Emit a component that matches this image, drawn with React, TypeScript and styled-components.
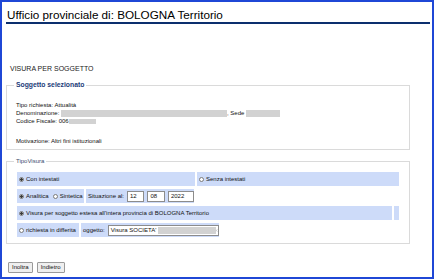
import styled, { createGlobalStyle } from 'styled-components';

const GlobalStyle = createGlobalStyle`
    html, body {
        margin: 0;
        padding: 0;
        background: #fff;
    }
    body {
        font-family: "Liberation Sans", Arial, sans-serif;
        color: #111;
    }
`;

const Frame = styled.div`
    width: 434px;
    height: 279px;
    box-sizing: border-box;
    border: 2px solid #1f47d6;
    background: #fff;
    overflow: hidden;
`;

const Header = styled.h1`
    margin: 0 2px 0 4px;
    padding: 5px 0 0 1px;
    font-size: 11.7px;
    line-height: 15px;
    font-weight: normal;
    color: #000;
    border-bottom: 2px solid #0c2f6e;
`;

const PageTitle = styled.h2`
    margin: 40px 0 0 8px;
    font-size: 7px;
    line-height: 9px;
    font-weight: normal;
    color: #222;
`;

const Box = styled.fieldset<{ $top: number }>`
    margin: ${(p) => p.$top}px 0 0 4px;
    width: 404px;
    box-sizing: border-box;
    padding: 0;
    border: 1px solid #dadada;
    min-width: 0;
`;

const Legend = styled.legend<{ $bold?: boolean }>`
    margin-left: 7px;
    padding: 0 2px;
    font-size: ${(p) => (p.$bold ? '6.8px' : '6px')};
    line-height: 8px;
    font-weight: ${(p) => (p.$bold ? 'bold' : 'normal')};
    color: ${(p) => (p.$bold ? '#1b3a78' : '#3b4c6e')};
`;

const Info = styled.div`
    padding: 12px 9px 4px;
`;

const Line = styled.div<{ $gap?: number }>`
    display: flex;
    align-items: center;
    height: 8px;
    margin-top: ${(p) => p.$gap ?? 0}px;
    font-size: 6px;
    white-space: pre;
`;

const Redact = styled.span<{ $w: number; $h?: number }>`
    display: inline-block;
    width: ${(p) => p.$w}px;
    height: ${(p) => p.$h ?? 7}px;
    background: #d2d2d2;
    flex-shrink: 0;
`;

const Rows = styled.div`
    display: flex;
    flex-direction: column;
    gap: 3px;
    padding: 7px 10px 6px;
`;

const Row = styled.div`
    display: flex;
    gap: 2px;
    height: 14px;
`;

const Cell = styled.div<{ $w: number }>`
    display: flex;
    align-items: center;
    gap: 2px;
    width: ${(p) => p.$w}px;
    padding-left: 2px;
    box-sizing: border-box;
    background: #cddbf9;
    font-size: 6px;
    white-space: pre;
`;

const Radio = styled.span<{ $checked?: boolean }>`
    display: inline-block;
    width: 5px;
    height: 5px;
    box-sizing: border-box;
    border-radius: 50%;
    border: 1px solid #7c7c7c;
    background: ${(p) =>
        p.$checked
            ? 'radial-gradient(circle, #3a3a3a 0 1px, #d8d8d8 1.5px)'
            : '#fff'};
    flex-shrink: 0;
`;

const Spacer = styled.span<{ $w: number }>`
    display: inline-block;
    width: ${(p) => p.$w}px;
`;

const DateField = styled.span<{ $w: number }>`
    display: inline-flex;
    align-items: center;
    width: ${(p) => p.$w}px;
    height: 11px;
    box-sizing: border-box;
    padding-left: 2px;
    margin-left: 1px;
    border: 1px solid #8c8c8c;
    background: #fff;
    font-size: 6px;
`;

const Select = styled.span`
    display: inline-flex;
    align-items: center;
    width: 111px;
    height: 11px;
    box-sizing: border-box;
    padding-left: 2px;
    margin-left: 1px;
    border: 1px solid #8c8c8c;
    background: #fff;
    font-size: 6px;
`;

const Actions = styled.div`
    display: flex;
    gap: 4px;
    margin: 18px 0 0 6px;
`;

const Button = styled.button`
    height: 11px;
    padding: 0 3px;
    font-family: "Liberation Sans", Arial, sans-serif;
    font-size: 6px;
    line-height: 9px;
    color: #111;
    background: #efefef;
    border: 1px solid #9a9a9a;
    border-radius: 1px;
`;

function App() {
    return (
        <>
            <GlobalStyle />
            <Frame>
                <Header>Ufficio provinciale di: BOLOGNA Territorio</Header>
                <PageTitle>VISURA PER SOGGETTO</PageTitle>

                <Box $top={8}>
                    <Legend $bold>Soggetto selezionato</Legend>
                    <Info>
                        <Line>Tipo richiesta: Attualità</Line>
                        <Line>
                            Denominazione: <Redact $w={166} />, Sede <Redact $w={34} />
                        </Line>
                        <Line>
                            Codice Fiscale: 006<Redact $w={27} $h={5} />
                        </Line>
                        <Line $gap={12}>Motivazione: Altri fini istituzionali</Line>
                    </Info>
                </Box>

                <Box $top={7}>
                    <Legend>TipoVisura</Legend>
                    <Rows>
                        <Row>
                            <Cell $w={178}>
                                <Radio $checked />
                                Con intestati
                            </Cell>
                            <Cell $w={202}>
                                <Radio />
                                Senza intestati
                            </Cell>
                        </Row>
                        <Row>
                            <Cell $w={67}>
                                <Radio $checked />
                                Analitica
                                <Spacer $w={0} />
                                <Radio />
                                Sintetica
                            </Cell>
                            <Cell $w={108}>
                                Situazione al:
                                <DateField $w={18}>12</DateField>
                                <DateField $w={18}>08</DateField>
                                <DateField $w={27}>2022</DateField>
                            </Cell>
                        </Row>
                        <Row>
                            <Cell $w={375}>
                                <Radio $checked />
                                Visura per soggetto estesa all'intera provincia di BOLOGNA Territorio
                            </Cell>
                            <Cell $w={5} />
                        </Row>
                        <Row>
                            <Cell $w={62}>
                                <Radio />
                                richiesta in differita
                            </Cell>
                            <Cell $w={138}>
                                oggetto:
                                <Select>
                                    Visura SOCIETA' <Redact $w={58} $h={7} />
                                    <svg width="4" height="7" viewBox="0 0 4 7">
                                        <path d="M3 1 L1 3.5 L3 6" fill="none" stroke="#666" strokeWidth="0.8" />
                                    </svg>
                                </Select>
                            </Cell>
                        </Row>
                    </Rows>
                </Box>

                <Actions>
                    <Button>Inoltra</Button>
                    <Button>Indietro</Button>
                </Actions>
            </Frame>
        </>
    );
}

export default App;
